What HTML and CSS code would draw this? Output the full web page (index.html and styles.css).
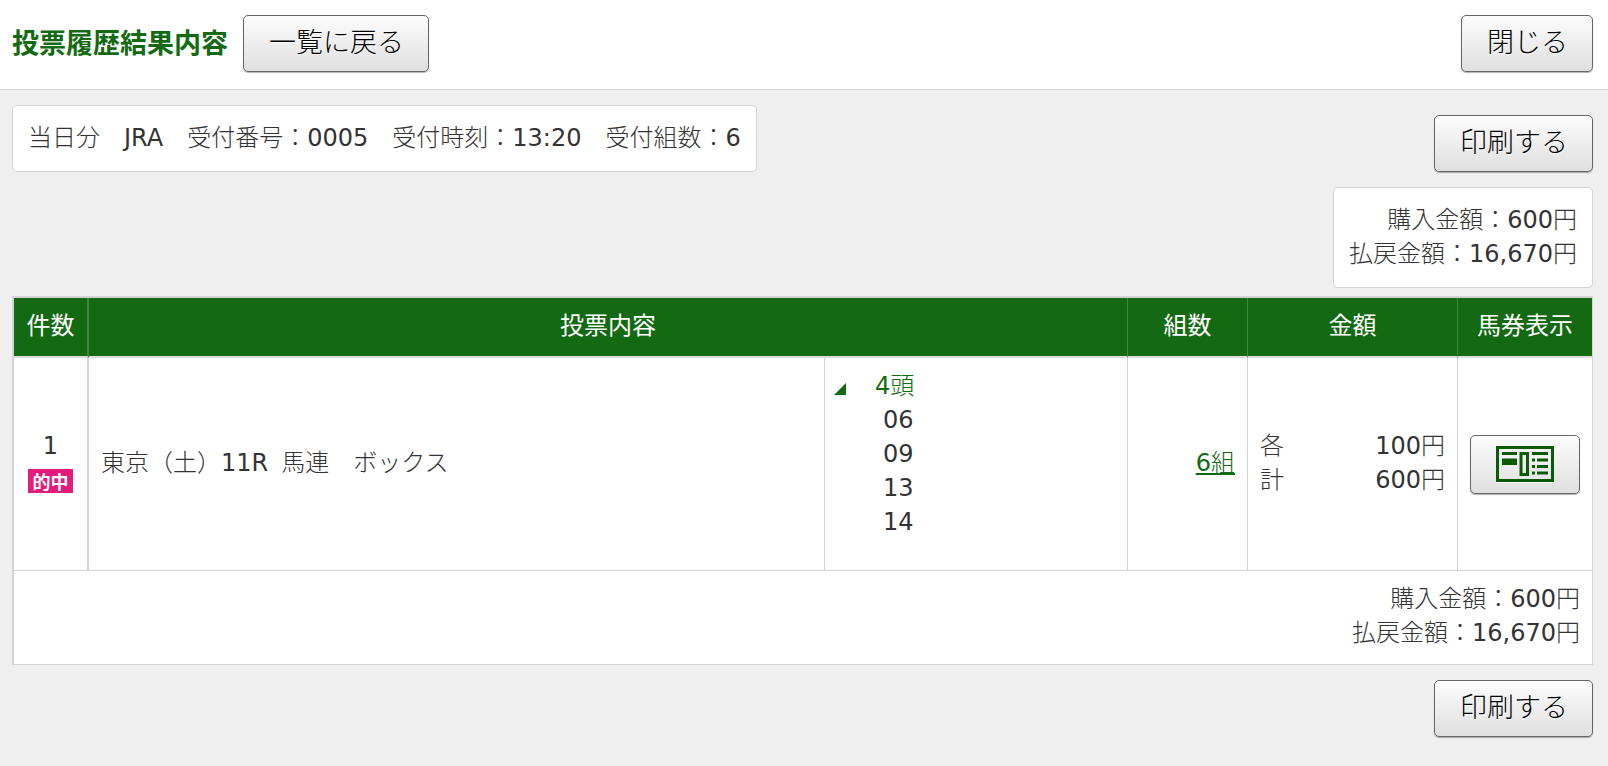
FILE: index.html
```html
<!DOCTYPE html>
<html lang="ja">
<head>
<meta charset="utf-8">
<title>投票履歴結果内容</title>
<link rel="stylesheet" href="styles.css">
</head>
<body>
<header class="page-header">
  <h1 class="page-title">投票履歴結果内容</h1>
  <button type="button" class="btn">一覧に戻る</button>
  <button type="button" class="btn btn-close">閉じる</button>
</header>
<main class="content">
  <div class="summary-row">
    <p class="panel">当日分　<span class="latin">JRA</span>　受付番号：<span class="latin">0005</span>　受付時刻：<span class="latin">13:20</span>　受付組数：<span class="latin">6</span></p>
    <button type="button" class="btn">印刷する</button>
  </div>
  <div class="panel panel-totals">
    <div>購入金額：<span class="latin">600</span>円</div>
    <div>払戻金額：<span class="latin">16,670</span>円</div>
  </div>
  <table class="bets">
    <colgroup>
      <col class="col-no"><col><col class="col-horses"><col class="col-sets"><col class="col-amount"><col class="col-ticket">
    </colgroup>
    <thead>
      <tr>
        <th scope="col" class="wide-rule">件数</th>
        <th scope="col" colspan="2">投票内容</th>
        <th scope="col">組数</th>
        <th scope="col">金額</th>
        <th scope="col">馬券表示</th>
      </tr>
    </thead>
    <tbody>
      <tr>
        <td class="wide-rule cell-no"><div><span class="latin">1</span></div><span class="badge">的中</span></td>
        <td>東京（土）<span class="latin">11R&nbsp;</span> 馬連　ボックス</td>
        <td class="cell-horses">
          <div class="horses">
            <svg class="corner" viewBox="0 0 12 12" aria-hidden="true"><path d="M12 0v12H0z"/></svg>
            <div>
              <div class="horses-count"><span class="latin">4</span>頭</div>
              <ul class="horses-list"><li><span class="latin">06</span></li><li><span class="latin">09</span></li><li><span class="latin">13</span></li><li><span class="latin">14</span></li></ul>
            </div>
          </div>
        </td>
        <td class="cell-sets"><a href="#sets"><span class="latin">6</span>組</a></td>
        <td>
          <div class="amount"><span>各</span><span><span class="latin">100</span>円</span></div>
          <div class="amount"><span>計</span><span><span class="latin">600</span>円</span></div>
        </td>
        <td class="cell-ticket">
          <button type="button" class="btn btn-ticket" aria-label="馬券表示">
            <svg class="ticket" viewBox="0 0 58 37" aria-hidden="true">
              <path class="ticket-shade" d="M0 36h58v1H0z"/>
              <path fill-rule="evenodd" d="M0 0h58v36H0zM3 3v30h52V3z"/>
              <path d="M6 6h15v3H6zM6 12.500h15v6.500H6zM36 6h16v3H36zM36 12.500h3v3h-3zM41 12.500h11v3H41zM36 19h3v3h-3zM41 19h11v3H41zM36 25.500h3v3h-3zM41 25.500h11v3H41z"/>
              <path fill-rule="evenodd" d="M23.500 6h9.500v24h-9.500zM26.500 9v18h3.500V9z"/>
            </svg>
          </button>
        </td>
      </tr>
    </tbody>
    <tfoot>
      <tr>
        <td colspan="6" class="cell-total">
          <div>購入金額：<span class="latin">600</span>円</div>
          <div>払戻金額：<span class="latin">16,670</span>円</div>
        </td>
      </tr>
    </tfoot>
  </table>
  <div class="footer-row"><button type="button" class="btn">印刷する</button></div>
</main>
</body>
</html>
```

FILE: styles.css
```css
* { box-sizing: border-box; }

body {
  margin: 0;
  background: #efefef;
  color: #333;
  font: 300 24px/34px "Noto Sans CJK JP", sans-serif;
}

.latin {
  font-family: "DejaVu Sans", sans-serif;
  font-weight: 400;
  line-height: 24px;
}

.page-header {
  display: flex;
  align-items: center;
  gap: 15px;
  padding: 15px 15px 17px 12px;
  background: #fff;
  border-bottom: 1px solid #d3d3d3;
}

.page-title {
  margin: 0;
  padding-bottom: 4px;
  color: #136a13;
  font-size: 27px;
  font-weight: 700;
}

.btn {
  height: 57px;
  padding: 0 24px 5px 25px;
  border: 1px solid #666;
  border-radius: 5px;
  background: linear-gradient(#fcfcfc, #dfdfdf);
  box-shadow: 0 1px 1px rgba(0, 0, 0, 0.3);
  color: #000;
  font: inherit;
  font-size: 27px;
  text-shadow: 0 1px 1px #fff;
  white-space: nowrap;
}

.btn-close { margin-left: auto; }

.content { padding: 15px 15px 28px 12px; }

.summary-row {
  display: flex;
  justify-content: space-between;
  align-items: flex-end;
}

.panel {
  margin: 0;
  padding: 13px 15px 18px;
  border: 1px solid #d3d3d3;
  border-radius: 5px;
  background: #fff;
}

.panel-totals {
  width: fit-content;
  margin: 15px 0 8px auto;
  text-align: right;
}

.bets {
  width: 100%;
  table-layout: fixed;
  border-spacing: 0;
  border: solid #d3d3d3;
  border-width: 2px 1px 0 2px;
  background: #fff;
}

.col-no { width: 75px; }
.col-horses { width: 303px; }
.col-sets { width: 120px; }
.col-amount { width: 210px; }
.col-ticket { width: 134px; }

.bets th {
  padding: 9px 0 15px;
  background: #136a13;
  border-right: 1px solid #3f873f;
  border-bottom: 2px solid #dcdcdc;
  color: #fff;
  font-weight: 400;
}

.bets td {
  padding: 9px 12px 16px;
  border-right: 1px solid #d3d3d3;
  border-bottom: 1px solid #d3d3d3;
}

.bets .wide-rule { border-right-width: 2px; }
.bets th:last-child,
.bets td:last-child { border-right: 0; }

.bets .cell-no {
  padding-left: 0;
  padding-right: 0;
  text-align: center;
}

.badge {
  display: block;
  width: 45px;
  margin: 8px auto 2px;
  background: #e31b7b;
  color: #fff;
  font-size: 18px;
  font-weight: 700;
  line-height: 24px;
}

.bets .cell-horses { padding-left: 9px; }

.horses {
  display: flex;
  align-items: flex-start;
  gap: 29px;
  padding-bottom: 17px;
}

.corner {
  width: 12px;
  height: 12px;
  margin-top: 16px;
  fill: #136a13;
}

.horses-count { color: #136a13; }

.horses-list {
  margin: 0;
  padding: 0 0 0 8px;
  list-style: none;
}

.cell-sets,
.cell-total { text-align: right; }

.cell-sets a {
  color: #136a13;
  text-underline-offset: 2px;
}

.amount {
  display: flex;
  justify-content: space-between;
}

.bets .cell-ticket {
  padding-top: 12px;
  padding-bottom: 12px;
}

.btn-ticket {
  display: flex;
  align-items: center;
  justify-content: center;
  width: 100%;
  height: 59px;
  padding: 0;
}

.ticket {
  width: 58px;
  height: 37px;
  fill: #0b5a05;
}

.ticket-shade { fill: #fff; }

.footer-row {
  display: flex;
  justify-content: flex-end;
  margin-top: 15px;
}
```
